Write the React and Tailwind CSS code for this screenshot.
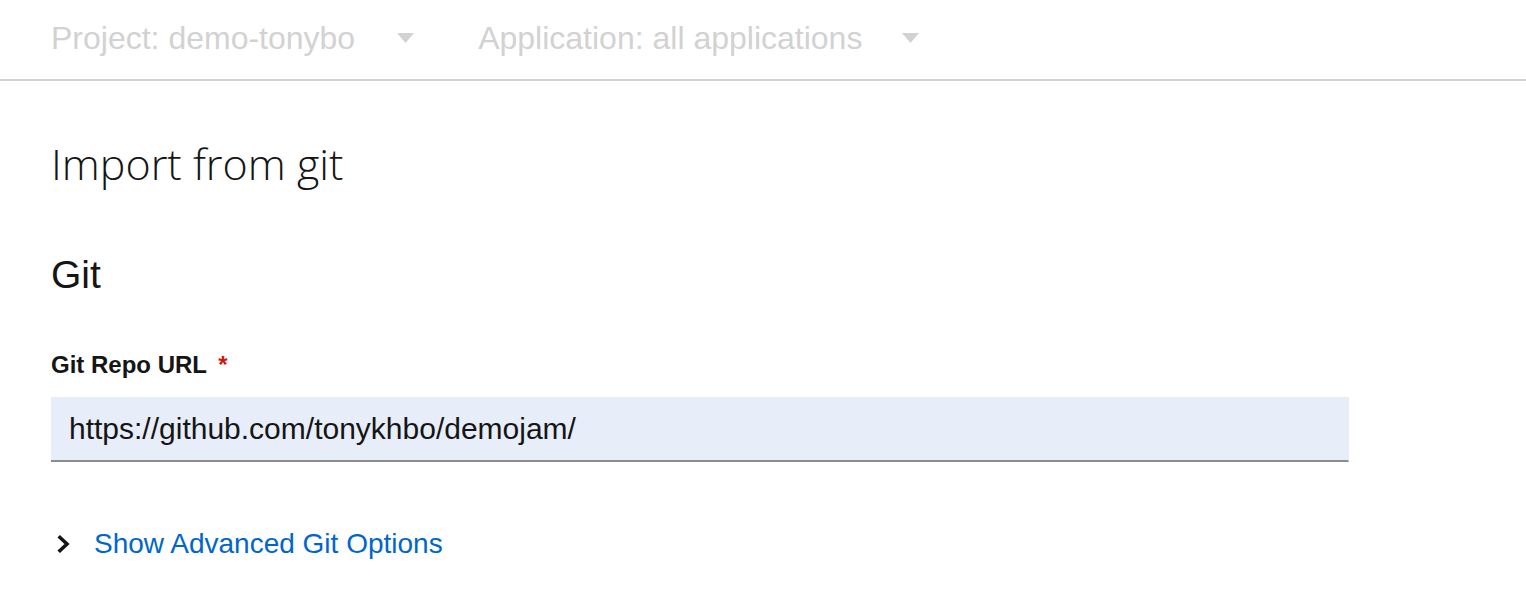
import React from 'react';

function Caret() {
  return (
    <svg width="17" height="10" viewBox="0 0 17 10" className="shrink-0">
      <path d="M0 0 L17 0 L8.5 10 Z" fill="#d2d2d2" />
    </svg>
  );
}

export default function App() {
  const sans = { fontFamily: '"Liberation Sans", Arial, sans-serif' };
  return (
    <div className="w-[1526px] h-[600px] bg-white overflow-hidden" style={sans}>
      <div className="h-[81px] border-b-2 border-[#d2d2d2] flex items-center pl-[51px] pb-[3px]">
        <span className="text-[32px] leading-none text-[#d2d2d2]">Project: demo-tonybo</span>
        <span className="ml-[42px]"><Caret /></span>
        <span className="ml-[64px] text-[32px] leading-none text-[#d2d2d2]">Application: all applications</span>
        <span className="ml-[40px]"><Caret /></span>
      </div>

      <div className="px-[51px]">
        <h1
          className="mt-[61px] text-[43px] leading-none font-light text-[#151515]"
          style={{ fontFamily: '"Open Sans", sans-serif' }}
        >
          Import from git
        </h1>

        <h2 className="mt-[70px] text-[39px] leading-none text-[#151515]">Git</h2>

        <label className="mt-[59px] block text-[24px] leading-none font-bold text-[#151515]">
          Git Repo URL <span className="text-[#c9190b] ml-[5px]">*</span>
        </label>

        <div className="mt-[20px] w-[1298px] h-[65px] bg-[#e7eefa] border-t border-r border-[#ededed] border-b-2 border-b-[#8a8d90] flex items-center pl-[18px]">
          <span className="text-[30px] leading-none text-[#151515]">https://github.com/tonykhbo/demojam/</span>
        </div>

        <div className="mt-[68px] flex items-center">
          <svg width="13" height="18" viewBox="0 0 13 18" className="ml-[6px] shrink-0">
            <path d="M3 2.5 L10 9 L3 15.5" fill="none" stroke="#151515" strokeWidth="3.6" strokeLinecap="square" />
          </svg>
          <span className="ml-[24px] text-[28px] leading-none text-[#0066cc]">Show Advanced Git Options</span>
        </div>
      </div>
    </div>
  );
}
